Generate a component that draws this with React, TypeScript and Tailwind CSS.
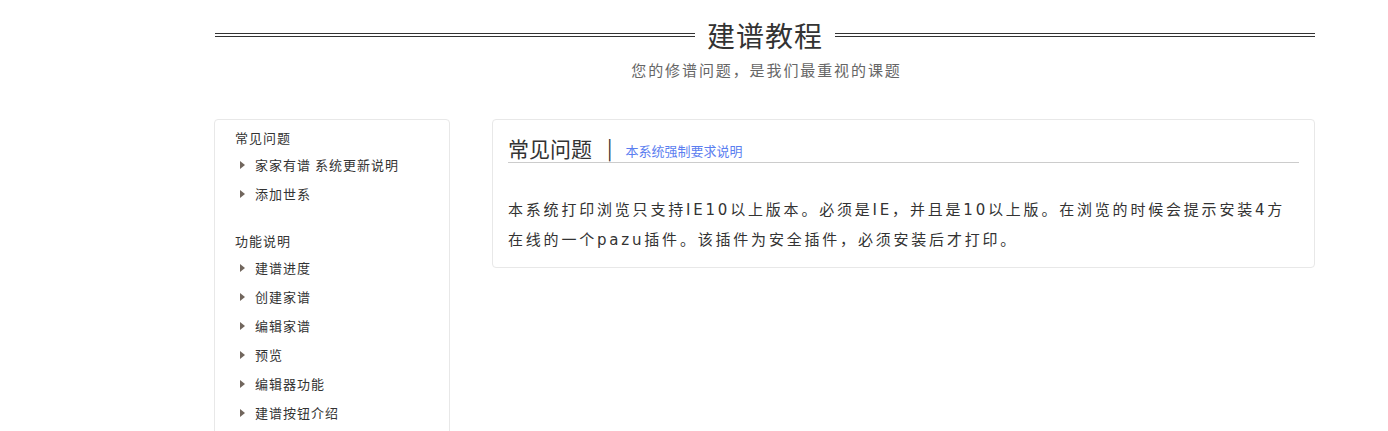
const faq = ['家家有谱 系统更新说明', '添加世系']
const features = ['建谱进度', '创建家谱', '编辑家谱', '预览', '编辑器功能', '建谱按钮介绍']

function NavGroup({ title, items }: { title: string; items: string[] }) {
  return (
    <div className="flex flex-col">
      <div className="text-[13px] tracking-[1px] leading-[24px] text-[#333]">{title}</div>
      <ul className="flex flex-col">
        {items.map((item) => (
          <li key={item} className="flex items-center h-[29px] pl-[5px] text-[13px] tracking-[1px] text-[#333]">
            <span className="w-0 h-0 border-y-[4px] border-y-transparent border-l-[5px] border-l-[#71665d] mr-[10px]" />
            {item}
          </li>
        ))}
      </ul>
    </div>
  )
}

export default function App() {
  return (
    <div className="w-[1388px] h-[431px] overflow-hidden bg-white font-['Noto_Sans_CJK_SC',sans-serif]">
      <div className="w-[1101px] ml-[214px]">
        {/* Heading with double rules */}
        <div className="flex items-center pt-[15px] pl-[1px]">
          <div className="flex-1 h-[4px] border-y border-[#333]" />
          <h1 className="px-[12px] text-[28px] tracking-[1px] leading-[40px] text-[#333]">建谱教程</h1>
          <div className="flex-1 h-[4px] border-y border-[#333]" />
        </div>
        <p className="mt-[4px] pl-[4px] text-center text-[15px] tracking-[1.9px] leading-[22px] text-[#666]">
          您的修谱问题，是我们最重视的课题
        </p>

        <div className="flex items-start gap-[42px] mt-[38px]">
          {/* Sidebar */}
          <aside className="w-[236px] shrink-0 border border-[#e8e8e8] rounded-[4px] pl-[20px] pt-[6px] pb-[40px] flex flex-col gap-[21px]">
            <NavGroup title="常见问题" items={faq} />
            <NavGroup title="功能说明" items={features} />
          </aside>

          {/* Content */}
          <section className="flex-1 border border-[#e8e8e8] rounded-[4px] px-[15px] pt-[15px] pb-[12px]">
            <div className="flex items-end border-b border-[#ccc] h-[28px]">
              <h2 className="text-[21px] leading-[28px] text-[#333]">常见问题</h2>
              <span className="ml-[15px] text-[20px] leading-[28px] text-[#333]">|</span>
              <a className="ml-[13px] mb-[1px] text-[13px] leading-[20px] text-[#5b7ef0]">本系统强制要求说明</a>
            </div>
            <p className="mt-[32px] pr-[10px] text-[15px] tracking-[2.8px] leading-[30px] text-[#333] font-['DejaVu_Sans','Noto_Sans_CJK_SC',sans-serif]">
              本系统打印浏览只支持IE10以上版本。必须是IE，并且是10以上版。在浏览的时候会提示安装4方在线的一个pazu插件。该插件为安全插件，必须安装后才打印。
            </p>
          </section>
        </div>
      </div>
    </div>
  )
}
